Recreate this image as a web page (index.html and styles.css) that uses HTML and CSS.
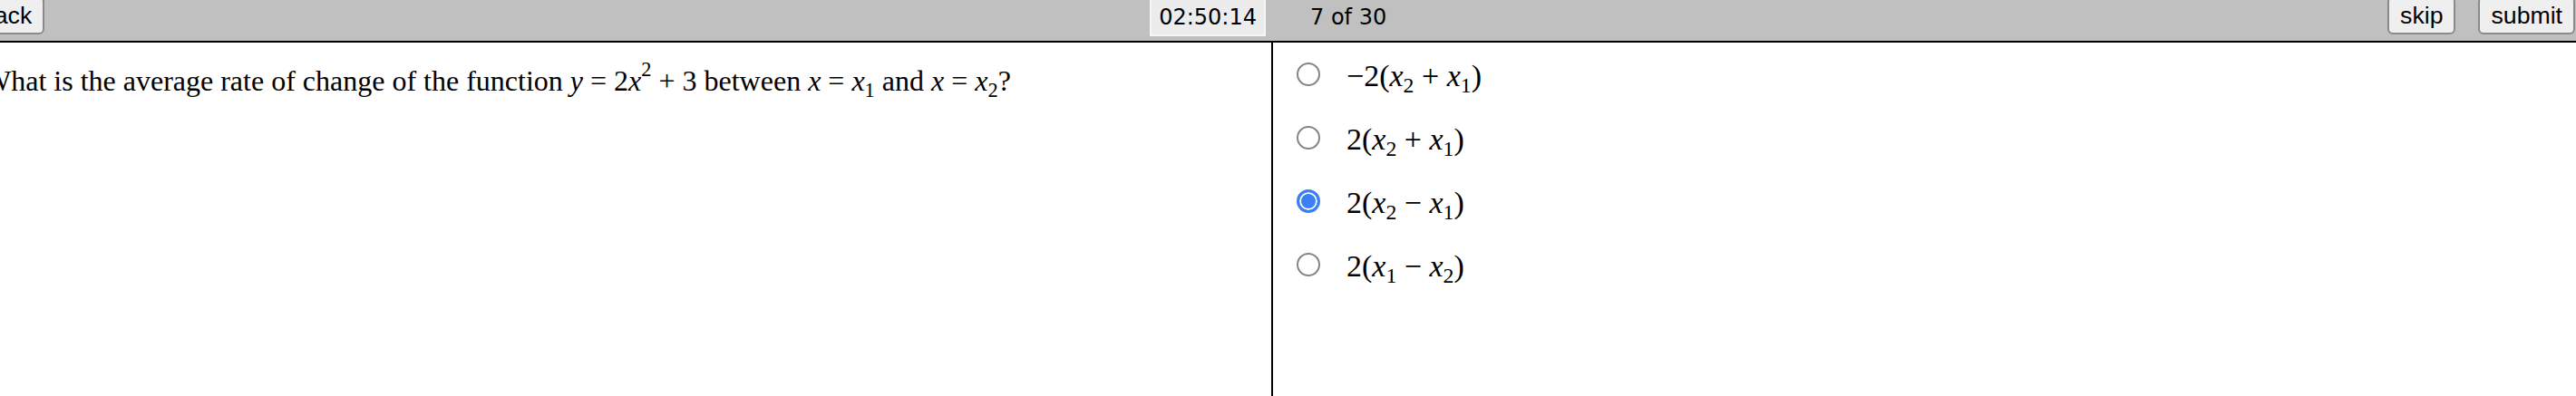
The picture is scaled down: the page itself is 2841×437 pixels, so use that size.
FILE: index.html
```html
<!DOCTYPE html>
<html lang="en">
<head>
    <meta charset="UTF-8">
    <title>Question 7 of 30</title>
    <link rel="stylesheet" href="styles.css">
</head>
<body>
    <!-- top bar: navigation, timer, progress -->
    <header class="topbar">
        <div class="bar-left">
            <button class="btn btn-back">Back</button>
            <span class="timer">02:50:14</span>
        </div>
        <div class="bar-right">
            <span class="counter">7 of 30</span>
            <div class="actions">
                <button class="btn">skip</button>
                <button class="btn">submit</button>
            </div>
        </div>
    </header>

    <main class="panes">
        <section class="question-pane">
            <p class="question">What is the average rate of change of the function <i>y</i> = 2<i>x</i><sup>2</sup> + 3 between <i>x</i> = <i>x</i><sub>1</sub> and <i>x</i> = <i>x</i><sub>2</sub>?</p>
        </section>

        <section class="answer-pane">
            <label class="choice">
                <input type="radio" name="answer">
                <span class="math">&minus;2(<i>x</i><sub>2</sub> + <i>x</i><sub>1</sub>)</span>
            </label>
            <label class="choice">
                <input type="radio" name="answer">
                <span class="math">2(<i>x</i><sub>2</sub> + <i>x</i><sub>1</sub>)</span>
            </label>
            <label class="choice">
                <input type="radio" name="answer" checked>
                <span class="math">2(<i>x</i><sub>2</sub> &minus; <i>x</i><sub>1</sub>)</span>
            </label>
            <label class="choice">
                <input type="radio" name="answer">
                <span class="math">2(<i>x</i><sub>1</sub> &minus; <i>x</i><sub>2</sub>)</span>
            </label>
        </section>
    </main>
</body>
</html>
```

FILE: styles.css
```css
body {
    margin: 0;
    background-color: #fff;
    color: #000;
    overflow: hidden;
}
/* Top bar */
.topbar {
    display: flex;
    height: 45px;
    background-color: #c0c0c0;
    border-bottom: 2px solid #000;
}
.bar-left {
    width: 1404px;
    display: flex;
    justify-content: space-between;
    align-items: flex-start;
}
.bar-right {
    flex: 1;
    display: flex;
    align-items: flex-start;
    padding-left: 41px;
    padding-right: 1px;
}
.btn {
    font-family: "Liberation Sans", Arial, sans-serif;
    font-size: 26.67px;
    color: #000;
    height: 42px;
    margin-top: -4px;
    padding: 0 12px;
    background-color: #efefef;
    border: 2px solid #8a8a8a;
    border-radius: 6px;
}
.btn-back {
    margin-left: -38px;
}
.timer {
    font-family: "DejaVu Sans", Verdana, sans-serif;
    font-size: 24px;
    line-height: 28px;
    padding: 5px 8px 5px 8px;
    margin-right: 8px;
    background-color: #ececec;
    border: 2px solid #f6f6f6;
    border-top: 0;
}
.counter {
    font-family: "DejaVu Sans", Verdana, sans-serif;
    font-size: 24px;
    line-height: 28px;
    padding-top: 5px;
}
.actions {
    margin-left: auto;
    display: flex;
    gap: 25px;
}
/* Content */
.panes {
    display: flex;
    height: 390px;
}
.question-pane {
    width: 1404px;
    box-sizing: border-box;
    border-right: 2px solid #000;
}
.question {
    font-family: "Liberation Serif", "Times New Roman", serif;
    font-size: 32px;
    line-height: 37px;
    margin: 24px 0 0 -18px;
    white-space: nowrap;
}
sub, sup {
    font-size: 0.7em;
    line-height: 0;
}
sub {
    vertical-align: -0.3em;
}
sup {
    vertical-align: 0.7em;
}
.answer-pane {
    flex: 1;
}
.choice {
    display: flex;
    align-items: center;
    height: 70px;
    padding-left: 26px;
    gap: 29px;
}
.choice input {
    appearance: none;
    -webkit-appearance: none;
    width: 26px;
    height: 26px;
    margin: 0;
    box-sizing: border-box;
    border: 2px solid #858585;
    border-radius: 50%;
    background-color: #fff;
}
.choice input:checked {
    border: 3px solid #3a7ff6;
    background-color: #3a7ff6;
    box-shadow: inset 0 0 0 2px #fff;
}
.math {
    font-family: "Liberation Serif", "Times New Roman", serif;
    font-size: 34px;
    line-height: 40px;
    padding-top: 3px;
}
```
